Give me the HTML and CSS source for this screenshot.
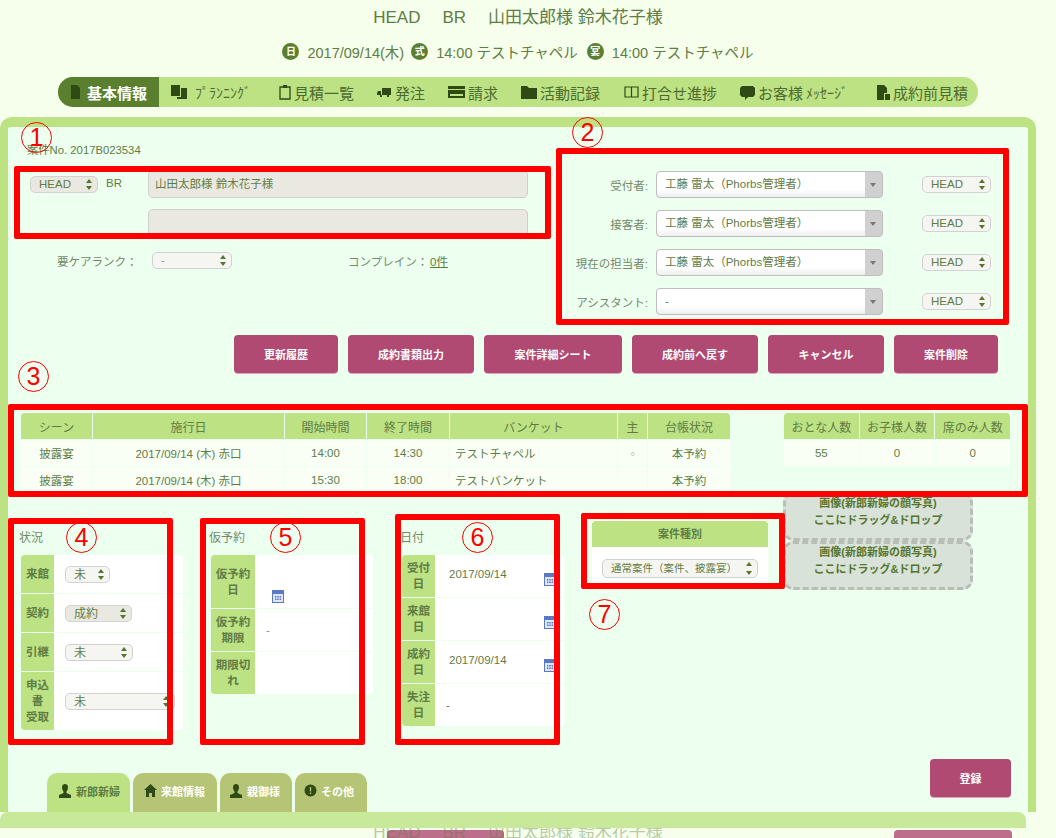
FILE: index.html
```html
<!DOCTYPE html>
<html lang="ja">
<head>
<meta charset="UTF-8" />
<title>基本情報</title>
<link rel="stylesheet" href="styles.css">
</head>
<body>
<!-- ヘッダー -->
<h1 class="title">HEAD<span class="sp"></span>BR<span class="sp"></span>山田太郎様 鈴木花子様</h1>
<div class="info">
    <i class="dot">日</i><span class="info-date">2017/09/14(木)</span>
    <i class="dot">式</i><span class="info-hall">14:00 テストチャペル</span>
    <i class="dot">宴</i><span>14:00 テストチャペル</span>
</div>

<nav class="nav">
    <a class="nav-item active"><svg width="11" height="16" viewBox="0 0 11 16"><path fill="#2f4a14" d="M1 1h6l3 3v11H1z"/></svg>基本情報</a>
    <a class="nav-item i2"><svg width="17" height="16" viewBox="0 0 17 16"><path fill="#2f4a14" d="M0 1h9v11H0zM10 4h6v11H6v-2h4z"/></svg><span class="half wide-half">ﾌﾟﾗﾝﾆﾝｸﾞ</span></a>
    <a class="nav-item i3"><svg width="12" height="16" viewBox="0 0 12 16"><path fill="none" stroke="#2f4a14" stroke-width="1.3" d="M1 3h10v12H1z"/><path fill="#2f4a14" d="M4 1h4v3H4z"/></svg>見積一覧</a>
    <a class="nav-item"><svg width="15" height="11" viewBox="0 0 15 11"><path fill="#2f4a14" d="M5 1h9v7H5zM1 4h3v4H0V6zM3 8h2v2H3zM10 8h2v2h-2z"/></svg>発注</a>
    <a class="nav-item"><svg width="17" height="12" viewBox="0 0 17 12"><path fill="#2f4a14" d="M0 0h17v3H0zM0 4h17v8H0z"/><path fill="#bde283" d="M2 8h13v2H2z"/></svg>請求</a>
    <a class="nav-item"><svg width="16" height="13" viewBox="0 0 16 13"><path fill="#2f4a14" d="M0 0h6l2 2h8v11H0z"/></svg>活動記録</a>
    <a class="nav-item i7"><svg width="15" height="12" viewBox="0 0 15 12"><path fill="none" stroke="#2f4a14" stroke-width="1.2" d="M1 1h13v10H1zM7.500 1v10"/></svg>打合せ進捗</a>
    <a class="nav-item"><svg width="15" height="15" viewBox="0 0 15 15"><path fill="#2f4a14" d="M2 1h11l2 2v7l-2 2H8l-3 3v-3H2l-2-2V3z"/></svg>お客様<span class="half">ﾒｯｾｰｼﾞ</span></a>
    <a class="nav-item i9"><svg width="13" height="15" viewBox="0 0 13 15"><path fill="#2f4a14" d="M0 0h7l3 3v5H7v7H0zM8 9h5v6H8z"/></svg>成約前見積</a>
</nav>

<main class="panel">
    <div class="top">
        <div class="top-left">
            <div class="case-no">案件No. 2017B023534</div>
            <div class="name-row">
                <div class="sel sel-gray w68">HEAD</div>
                <span class="br">BR</span>
                <div class="name-boxes">
                    <div class="name-input">山田太郎様 鈴木花子様</div>
                    <div class="name-input"></div>
                </div>
            </div>
            <div class="care-row">
                <span class="care-label">要ケアランク：</span>
                <div class="sel w80 sel-muted">-</div>
                <span class="complain">コンプレイン：</span>
                <a class="count">0件</a>
            </div>
        </div>
        <div class="staff">
            <div class="staff-row"><label>受付者:</label><div class="combo">工藤 雷太（Phorbs管理者）</div><div class="sel w69">HEAD</div></div>
            <div class="staff-row"><label>接客者:</label><div class="combo">工藤 雷太（Phorbs管理者）</div><div class="sel w69">HEAD</div></div>
            <div class="staff-row"><label>現在の担当者:</label><div class="combo">工藤 雷太（Phorbs管理者）</div><div class="sel w69">HEAD</div></div>
            <div class="staff-row"><label>アシスタント:</label><div class="combo">-</div><div class="sel w69">HEAD</div></div>
        </div>
    </div>

    <div class="actions">
        <a class="btn w104">更新履歴</a>
        <a class="btn w126">成約書類出力</a>
        <a class="btn w138">案件詳細シート</a>
        <a class="btn w126">成約前へ戻す</a>
        <a class="btn w116">キャンセル</a>
        <a class="btn w104">案件削除</a>
    </div>

    <div class="tables">
        <table class="grid scene">
            <colgroup><col class="c1"><col class="c2"><col class="c3"><col class="c4"><col class="c5"><col class="c6"><col class="c7"></colgroup>
            <tr><th class="tl">シーン</th><th>施行日</th><th>開始時間</th><th>終了時間</th><th>バンケット</th><th>主</th><th class="tr">台帳状況</th></tr>
            <tr><td>披露宴</td><td>2017/09/14 (木) 赤口</td><td>14:00</td><td>14:30</td><td class="left">テストチャペル</td><td class="small">○</td><td>本予約</td></tr>
            <tr><td>披露宴</td><td>2017/09/14 (木) 赤口</td><td>15:30</td><td>18:00</td><td class="left">テストバンケット</td><td></td><td>本予約</td></tr>
        </table>
        <table class="grid people">
            <tr><th class="tl">おとな人数</th><th>お子様人数</th><th class="tr">席のみ人数</th></tr>
            <tr><td>55</td><td>0</td><td>0</td></tr>
        </table>
    </div>

    <div class="lower">
        <section class="sec">
            <h4>状況</h4>
            <table class="form status">
                <tr class="h38"><th>来館</th><td><div class="sel w45 big">未</div></td></tr>
                <tr class="h38"><th>契約</th><td><div class="sel sel-gray w67 big">成約</div></td></tr>
                <tr class="h38"><th>引継</th><td><div class="sel w68 big">未</div></td></tr>
                <tr class="h58"><th>申込<br>書<br>受取</th><td><div class="sel w110 big">未</div></td></tr>
            </table>
        </section>
        <section class="sec">
            <h4>仮予約</h4>
            <table class="form">
                <tr class="h53"><th class="wide">仮予約<br>日</th><td class="bottom"><svg class="cal" width="14" height="14" viewBox="0 0 14 14"><use href="#cal"/></svg></td></tr>
                <tr class="h42"><th class="wide">仮予約<br>期限</th><td class="dash">-</td></tr>
                <tr class="h42"><th class="wide">期限切<br>れ</th><td></td></tr>
            </table>
        </section>
        <section class="sec">
            <h4>日付</h4>
            <table class="form dates">
                <tr class="h42"><th>受付<br>日</th><td><span class="date">2017/09/14</span><svg class="cal-r" width="14" height="14" viewBox="0 0 14 14"><use href="#cal"/></svg></td></tr>
                <tr class="h42"><th>来館<br>日</th><td><span class="date"></span><svg class="cal-r" width="14" height="14" viewBox="0 0 14 14"><use href="#cal"/></svg></td></tr>
                <tr class="h42"><th>成約<br>日</th><td><span class="date">2017/09/14</span><svg class="cal-r" width="14" height="14" viewBox="0 0 14 14"><use href="#cal"/></svg></td></tr>
                <tr class="h42"><th>失注<br>日</th><td class="dash-s">-</td></tr>
            </table>
        </section>
        <section class="kind">
            <h5>案件種別</h5>
            <div class="kind-body"><div class="sel w156">通常案件（案件、披露宴）</div></div>
        </section>
        <div class="drops">
            <div class="drop">画像(新郎新婦の顔写真)<br>ここにドラッグ&amp;ドロップ</div>
            <div class="drop">画像(新郎新婦の顔写真)<br>ここにドラッグ&amp;ドロップ</div>
        </div>
    </div>

    <div class="foot">
        <div class="tabs">
            <a class="tab on"><svg width="14" height="14" viewBox="0 0 14 14"><use href="#person"/></svg>新郎新婦</a>
            <a class="tab"><svg width="13" height="13" viewBox="0 0 13 13"><path fill="#2f4a14" d="M6.500 0L13 6h-2v7H8V9H5v4H2V6H0z"/></svg>来館情報</a>
            <a class="tab"><svg width="14" height="14" viewBox="0 0 14 14"><use href="#person"/></svg>親御様</a>
            <a class="tab"><svg width="13" height="13" viewBox="0 0 13 13"><circle cx="6.500" cy="6.500" r="6" fill="#2f4a14"/><path fill="#b5c475" d="M5.800 3h1.400v4.500H5.800zM5.800 8.500h1.400V10H5.800z"/></svg>その他</a>
        </div>
        <a class="btn save">登録</a>
    </div>
</main>

<!-- 下に重なった次のブロック -->
<div class="next">
    <a class="btn ghost-a"></a>
    <a class="btn ghost-b"></a>
    <div class="ghost-title">HEAD<span class="sp"></span>BR<span class="sp"></span>山田太郎様 鈴木花子様</div>
</div>

<!-- 赤枠の注釈 -->
<div class="mark m1"></div>
<div class="mark m2"></div>
<div class="mark m3"></div>
<div class="mark m4"></div>
<div class="mark m5"></div>
<div class="mark m6"></div>
<div class="mark m7"></div>
<span class="num n1">1</span>
<span class="num n2">2</span>
<span class="num n3">3</span>
<span class="num n4">4</span>
<span class="num n5">5</span>
<span class="num n6">6</span>
<span class="num n7">7</span>

<svg class="defs" width="0" height="0">
    <symbol id="cal" viewBox="0 0 14 14">
        <path fill="#5a78c8" d="M1 1h12v13H1z"/>
        <path fill="#dfe6f6" d="M2 5h10v8H2z"/>
        <path fill="#5a78c8" d="M4 7h1.500v1.500H4zM6.300 7h1.500v1.500H6.300zM8.600 7h1.500v1.500H8.600zM4 9.500h1.500V11H4zM6.300 9.500h1.500V11H6.300zM8.600 9.500h1.500V11H8.600z"/>
    </symbol>
    <symbol id="person" viewBox="0 0 14 14">
        <path fill="#2f4a14" d="M7 0c2 0 3 1.500 3 3.500S9 7 8.500 7.500V9L13 11v3H1v-3l4.500-2V7.500C5 7 4 5.500 4 3.500S5 0 7 0z"/>
    </symbol>
</svg>
</body>
</html>
```
FILE: styles.css
```css
* {
    margin: 0;
    padding: 0;
    box-sizing: border-box;
}

html,
body {
    height: 838px;
    overflow: hidden;
}

body {
    position: relative;
    background: #f5ffec;
    color: #5f7c45;
    font-family: "Liberation Sans", "Noto Sans CJK JP", sans-serif;
    font-size: 11.500px;
}

.title {
    width: 1036px;
    height: 36px;
    line-height: 36px;
    text-align: center;
    font-size: 17px;
    font-weight: normal;
}

.sp {
    display: inline-block;
    width: 22px;
}

.info {
    width: 1036px;
    height: 30px;
    display: flex;
    align-items: center;
    justify-content: center;
    font-size: 14.500px;
    padding-top: 1px;
}

.dot {
    width: 17px;
    height: 17px;
    border-radius: 50%;
    background: #5a7f2e;
    color: #fff;
    font-style: normal;
    font-size: 10px;
    font-weight: bold;
    text-align: center;
    line-height: 17px;
    margin-right: 8px;
}

.info-date {
    margin-right: 7px;
}

.info-hall {
    margin-right: 9px;
}

.nav {
    margin: 11px 0 0 58px;
    width: 920px;
    height: 30px;
    border-radius: 15px;
    background: #bde283;
    display: flex;
    align-items: center;
    gap: 23px;
    font-size: 15px;
    color: #4d6a30;
}

.nav-item {
    display: flex;
    align-items: center;
    gap: 3px;
    white-space: nowrap;
}

.nav-item.active {
    height: 30px;
    width: 101px;
    padding-left: 12px;
    gap: 6px;
    margin-right: -11px;
    border-radius: 15px 0 0 15px;
    background: #5a7f2e;
    color: #fff;
    font-weight: bold;
}

.i3 {
    margin-left: 5px;
}

.i7 {
    margin-left: 1px;
}

.i9 {
    margin-left: 6px;
}

.half {
    font-size: 14px;
}

.wide-half {
    margin-left: 4px;
}

.panel {
    margin-top: 10px;
    width: 1036px;
    height: 695px;
    border: 8px solid #bde283;
    border-top-width: 10px;
    border-bottom: 0;
    border-radius: 12px 12px 0 0;
    background: #edffee;
}

.top {
    height: 208px;
    display: flex;
}

.top-left {
    width: 560px;
    padding-left: 19px;
}

.case-no {
    margin-top: 16px;
    height: 14px;
    line-height: 14px;
    font-size: 11.300px;
}

.name-row {
    margin: 13px 0 0 3px;
    display: flex;
    align-items: flex-start;
}

.name-row > .sel {
    margin-top: 6px;
}

.br {
    width: 42px;
    margin: 7px 0 0 8px;
}

.name-boxes {
    display: flex;
    flex-direction: column;
    gap: 11px;
}

.name-input {
    width: 380px;
    height: 28px;
    line-height: 26px;
    padding-left: 6px;
    border: 1px solid #cfcfc8;
    border-radius: 5px;
    background: #e9e9e2;
}

.care-row {
    margin: 15px 0 0 30px;
    display: flex;
    align-items: center;
    color: #73896a;
}

.care-label {
    width: 95px;
}

.complain {
    margin-left: 116px;
    width: 82px;
}

.count {
    text-decoration: underline;
    color: #5c7d3e;
}

.staff {
    padding: 44px 0 0 0;
    position: relative;
    left: -8px;
    display: flex;
    flex-direction: column;
    gap: 12px;
}

.staff-row {
    display: flex;
    align-items: center;
    height: 27px;
}

.staff-row label {
    width: 88px;
    text-align: right;
    margin-right: 8px;
    color: #73896a;
    white-space: nowrap;
}

.combo {
    width: 227px;
    height: 27px;
    line-height: 25px;
    padding-left: 8px;
    margin-right: 39px;
    border: 1px solid #bdbdbd;
    border-radius: 4px;
    background: linear-gradient(to right, transparent 208px, #d0d0d0 208px), linear-gradient(#fff 70%, #eee);
    position: relative;
}

.combo::after {
    content: "";
    position: absolute;
    right: 6px;
    top: 11px;
    border: 3px solid transparent;
    border-top: 4px solid #777;
}

/* 上下矢印つきのセレクト */
.sel {
    position: relative;
    height: 17px;
    line-height: 15px;
    padding-left: 8px;
    border: 1px solid #d2d2d2;
    border-radius: 5px;
    background: #f5f5f2;
    white-space: nowrap;
    flex: none;
}

.sel::before,
.sel::after {
    content: "";
    position: absolute;
    right: 5px;
    border: 3px solid transparent;
}

.sel::before {
    top: -1px;
    border-bottom: 4px solid #55752f;
}

.sel::after {
    bottom: -1px;
    border-top: 4px solid #55752f;
}

.sel-gray {
    background: #e9e9e2;
}

.sel-muted {
    color: #999;
}

.big {
    font-size: 12px;
    line-height: 17px;
}

.w45 { width: 45px; }
.w67 { width: 67px; }
.w68 { width: 68px; }
.w69 { width: 69px; }
.w80 { width: 80px; }
.w110 { width: 110px; }

.w156 {
    width: 156px;
    height: 19px;
    line-height: 17px;
    font-size: 10.500px;
}

.actions {
    height: 38px;
    display: flex;
    justify-content: flex-end;
    gap: 10px;
    padding-right: 30px;
}

.btn {
    display: flex;
    align-items: center;
    justify-content: center;
    height: 38px;
    border-radius: 4px;
    background: #b04a72;
    color: #fff;
    font-size: 11px;
    font-weight: bold;
    box-shadow: 0 1px 0 #d9a5ba;
}

.w104 { width: 104px; }
.w116 { width: 116px; }
.w126 { width: 126px; }
.w138 { width: 138px; }

.tables {
    margin-top: 40px;
    padding-left: 13px;
    display: flex;
    align-items: flex-start;
    gap: 53px;
}

.grid {
    border-collapse: separate;
    border-spacing: 1px;
    margin: -1px;
    table-layout: fixed;
    text-align: center;
}

.grid th {
    height: 26px;
    background: #bde283;
    font-size: 12px;
    font-weight: normal;
}

.grid td {
    height: 26px;
    background: #f9fff5;
}

.scene {
    width: 711px;
}

.people {
    width: 228px;
    margin-left: 0;
}

.c1 { width: 71px; }
.c2 { width: 191px; }
.c3 { width: 81px; }
.c4 { width: 82px; }
.c5 { width: 167px; }
.c6 { width: 29px; }
.c7 { width: 82px; }

.tl { border-top-left-radius: 4px; }
.tr { border-top-right-radius: 4px; }

.grid .left {
    text-align: left;
    padding-left: 5px;
}

.small {
    font-size: 7px;
}

.lower {
    height: 262px;
    margin-top: 4px;
    padding-left: 13px;
    display: flex;
    align-items: flex-start;
}

.sec {
    width: 162px;
    margin: 29px 28px 0 0;
}

.sec:nth-child(2) {
    margin-right: 29px;
}

.sec h4 {
    height: 20px;
    line-height: 20px;
    margin: 2px 0 7px -2px;
    font-size: 12px;
    font-weight: normal;
    color: #73896a;
}

.form {
    width: 162px;
    border-collapse: separate;
    border-spacing: 0 1px;
    margin-top: -1px;
    table-layout: fixed;
}

.form th {
    width: 33px;
    background: #bde283;
    font-weight: bold;
    text-align: center;
    line-height: 16px;
}

.form th.wide {
    width: 44px;
}

.form td {
    background: #fff;
    padding-left: 11px;
    position: relative;
}

.form tr:first-child th {
    border-top-left-radius: 4px;
}

.form tr:last-child th {
    border-bottom-left-radius: 4px;
}

.form tr:first-child td {
    border-top-right-radius: 4px;
}

.form tr:last-child td {
    border-bottom-right-radius: 4px;
}

.h38 { height: 38px; }
.h42 { height: 42px; }
.h53 { height: 53px; }
.h58 { height: 58px; }

.form td.bottom {
    padding: 0 0 5px 16px;
    vertical-align: bottom;
}

.cal {
    display: block;
}

.dash {
    color: #888;
}

.dash-s {
    padding-left: 7px;
}

.date {
    display: inline-block;
    margin-left: 3px;
    position: relative;
    top: -2px;
}

.cal-r {
    position: absolute;
    left: 108px;
    bottom: 11px;
}

.kind {
    width: 176px;
    margin: 24px 0 0 0;
    background: #fff;
    border-radius: 4px 4px 0 0;
}

.kind h5 {
    height: 26px;
    line-height: 26px;
    text-align: center;
    font-size: 11px;
    background: #bde283;
    border-radius: 4px 4px 0 0;
}

.kind-body {
    height: 40px;
    padding: 12px 0 0 10px;
}

.drops {
    margin: -5px 0 0 15px;
    width: 190px;
}

.drop {
    height: 49px;
    border: 3px dashed #b8bdb5;
    border-radius: 10px;
    background: #d8e2d8;
    text-align: center;
    font-size: 11px;
    font-weight: bold;
    line-height: 17px;
    color: #55752f;
}

.foot {
    height: 53px;
    display: flex;
    justify-content: space-between;
    padding: 0 17px 0 39px;
}

.tabs {
    display: flex;
    align-items: flex-end;
    gap: 3px;
}

.tab {
    height: 39px;
    padding: 0 0 4px 11px;
    display: flex;
    align-items: center;
    gap: 4px;
    border-radius: 10px 10px 0 0;
    background: #b5c475;
    color: #fff;
    font-size: 11px;
    font-weight: bold;
    width: 84px;
}

.tab:nth-child(3),
.tab:nth-child(4) {
    width: 72px;
    padding-left: 9px;
}

.tab.on {
    width: 83px;
    background: #bde283;
    color: #5c7d3e;
}

.save {
    width: 81px;
}

.next {
    position: relative;
    width: 1026px;
    height: 26px;
    border-top: 16px solid #c8e89a;
    border-radius: 8px 8px 0 0;
    background: #f5ffec;
    overflow: hidden;
}

.ghost-a,
.ghost-b {
    position: absolute;
    top: 2px;
    opacity: 0.8;
}

.ghost-a {
    left: 387px;
    width: 117px;
}

.ghost-b {
    left: 894px;
    width: 118px;
}

.ghost-title {
    position: absolute;
    top: -5px;
    left: 0;
    width: 1036px;
    text-align: center;
    font-size: 17px;
    line-height: 20px;
    opacity: 0.4;
}

/* 注釈 */
.mark {
    position: absolute;
    border: 6px solid #f00;
    border-radius: 2px;
}

.m1 { left: 14px; top: 166px; width: 537px; height: 73px; }
.m2 { left: 556px; top: 148px; width: 453px; height: 177px; }
.m3 { left: 8px; top: 404px; width: 1020px; height: 93px; }
.m4 { left: 8px; top: 518px; width: 165px; height: 227px; }
.m5 { left: 200px; top: 518px; width: 165px; height: 227px; }
.m6 { left: 395px; top: 514px; width: 165px; height: 231px; }
.m7 { left: 581px; top: 513px; width: 204px; height: 76px; }

.num {
    position: absolute;
    width: 31px;
    height: 31px;
    border: 1px solid #f00;
    border-radius: 50%;
    text-align: center;
    color: #f00;
    font-size: 25px;
    line-height: 29px;
}

.n1 { left: 21px; top: 122px; }
.n2 { left: 572px; top: 117px; }
.n3 { left: 18px; top: 361px; }
.n4 { left: 66px; top: 522px; }
.n5 { left: 270px; top: 522px; }
.n6 { left: 462px; top: 522px; }
.n7 { left: 589px; top: 599px; }

.defs {
    position: absolute;
}
```
